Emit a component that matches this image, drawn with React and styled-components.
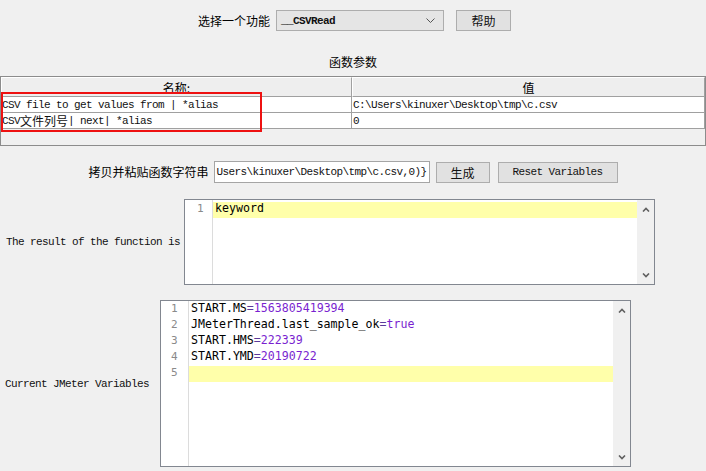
import React from 'react';
import styled, { createGlobalStyle } from 'styled-components';

const GlobalStyle = createGlobalStyle`
  html, body {
    margin: 0;
    padding: 0;
    background: #f0f0f0;
  }
  body {
    font-family: "Noto Sans CJK SC", "Liberation Sans", sans-serif;
    color: #000;
  }
`;

const SONG = `"Liberation Mono", "Noto Sans CJK SC", monospace`;
const CJK = `"Noto Sans CJK SC", "Liberation Sans", sans-serif`;

const Page = styled.div`
  width: 706px;
  height: 471px;
  overflow: hidden;
  display: flex;
  flex-direction: column;
  padding-top: 10px;
  box-sizing: border-box;
`;

const CenterRow = styled.div`
  display: flex;
  align-items: center;
  justify-content: center;
  margin-top: ${p => p.$top || 0}px;
  height: ${p => p.$h || 22}px;
  padding-left: ${p => p.$shift || 0}px;
`;

const CjkLabel = styled.span`
  font-family: ${CJK};
  font-size: 12px;
  line-height: 16px;
  white-space: nowrap;
  margin-right: ${p => p.$gap || 6}px;
`;

const Select = styled.div`
  width: 168px;
  height: 21px;
  box-sizing: border-box;
  border: 1px solid #adadad;
  background: #e5e5e5;
  display: flex;
  align-items: center;
  padding: 0 8px 0 4px;
  font-family: ${SONG};
  font-size: 11px;
  letter-spacing: -0.6px;
  font-weight: bold;
  color: #111;
`;

const SelectText = styled.span`
  flex: 1;
`;

const Button = styled.div`
  width: ${p => p.$w}px;
  height: 21px;
  box-sizing: border-box;
  border: 1px solid #adadad;
  background: #e1e1e1;
  display: flex;
  align-items: center;
  justify-content: center;
  margin-left: ${p => p.$gap || 0}px;
  font-family: ${p => (p.$mono ? SONG : CJK)};
  font-size: ${p => (p.$mono ? 11 : 12)}px;
  letter-spacing: ${p => (p.$mono ? '-0.6px' : '0')};
  color: #111;
`;

const Caption = styled.div`
  margin-top: 23px;
  height: 16px;
  line-height: 16px;
  text-align: center;
  font-family: ${CJK};
  font-size: 12px;
`;

const TableWrap = styled.div`
  position: relative;
  margin-top: 6px;
  height: 70px;
  box-sizing: border-box;
  border: 1px solid #8c8c8c;
  background: #f0f0f0;
`;

const HeaderRow = styled.div`
  display: grid;
  grid-template-columns: 351px 1fr;
  height: 20px;
`;

const HeaderCell = styled.div`
  border-top: 1px solid #ffffff;
  border-left: 1px solid #ffffff;
  border-right: 1px solid #a0a0a0;
  border-bottom: 1px solid #a0a0a0;
  background: #eeeeee;
  display: flex;
  align-items: center;
  justify-content: center;
  font-family: ${CJK};
  font-size: 12px;
`;

const DataRow = styled.div`
  display: grid;
  grid-template-columns: 351px 1fr;
  height: 16px;
  background: #fff;
`;

const DataCell = styled.div`
  border-right: 1px solid #a0a0a0;
  border-bottom: 1px solid #a0a0a0;
  padding-left: 1px;
  display: flex;
  align-items: center;
  font-family: ${SONG};
  font-size: 11px;
  letter-spacing: -0.6px;
  color: #111;
  white-space: pre;
  overflow: hidden;
`;

const Wide = styled.span`
  font-family: ${CJK};
  font-size: 12px;
  letter-spacing: 0;
`;

const Highlight = styled.div`
  position: absolute;
  left: 0;
  top: 15px;
  width: 261px;
  height: 40px;
  box-sizing: border-box;
  border: 2px solid #ee1111;
  pointer-events: none;
`;

const Field = styled.div`
  width: 216px;
  height: 22px;
  box-sizing: border-box;
  border: 1px solid #a5a5a5;
  background: #fff;
  display: flex;
  justify-content: flex-end;
  align-items: center;
  overflow: hidden;
  padding-right: 2px;
  font-family: ${SONG};
  font-size: 11px;
  letter-spacing: -0.6px;
  white-space: pre;
  color: #111;
`;

const EditorRow = styled.div`
  display: flex;
  align-items: center;
  margin-top: ${p => p.$top}px;
  padding-left: ${p => p.$pad}px;
`;

const MonoLabel = styled.div`
  width: ${p => p.$w}px;
  font-family: ${SONG};
  font-size: 11px;
  letter-spacing: -0.6px;
  color: #111;
  white-space: pre;
`;

const EditorBox = styled.div`
  width: 471px;
  height: ${p => p.$h}px;
  box-sizing: border-box;
  border: 1px solid #828790;
  background: #fff;
  display: flex;
`;

const Gutter = styled.div`
  width: 28px;
  border-right: 1px solid #dcdcdc;
  padding-top: ${p => p.$top}px;
  box-sizing: border-box;
`;

const LineNo = styled.div`
  height: 16px;
  line-height: 14px;
  padding-left: ${p => p.$indent}px;
  font-family: "DejaVu Sans Mono", monospace;
  font-size: 11px;
  color: #8a8a8a;
`;

const Lines = styled.div`
  flex: 1;
  padding-top: ${p => p.$top}px;
`;

const Line = styled.div`
  height: 16px;
  line-height: 13px;
  padding-left: 2px;
  background: ${p => (p.$active ? '#ffffaa' : 'transparent')};
  font-family: "DejaVu Sans Mono", monospace;
  font-size: 11.6px;
  color: #000;
  white-space: pre;
`;

const Value = styled.span`
  color: #7a1fd0;
`;

const Eq = styled.span`
  color: #5a3a9a;
`;

const Scrollbar = styled.div`
  width: 17px;
  background: #f0f0f0;
  display: flex;
  flex-direction: column;
  justify-content: space-between;
  align-items: center;
  padding: 7px 0 6px;
  box-sizing: border-box;
`;

const Chevron = ({ up }) => (
  <svg width="8" height="5" viewBox="0 0 8 5">
    <polyline
      points={up ? '1,4.5 4,1.5 7,4.5' : '1,0.5 4,3.5 7,0.5'}
      fill="none"
      stroke="#606060"
      strokeWidth="1.6"
    />
  </svg>
);

const Editor = ({ height, lines, active, top, indent }) => (
  <EditorBox $h={height}>
    <Gutter $top={top}>
      {lines.map((_, i) => (
        <LineNo key={i} $indent={indent}>
          {i + 1}
        </LineNo>
      ))}
    </Gutter>
    <Lines $top={top}>
      {lines.map((l, i) => (
        <Line key={i} $active={i === active}>
          {l}
        </Line>
      ))}
    </Lines>
    <Scrollbar>
      <Chevron up />
      <Chevron />
    </Scrollbar>
  </EditorBox>
);

const kv = (k, v) => (
  <>
    {k}
    <Eq>=</Eq>
    <Value>{v}</Value>
  </>
);

const variables = [
  kv('START.MS', '1563805419394'),
  kv('JMeterThread.last_sample_ok', 'true'),
  kv('START.HMS', '222339'),
  kv('START.YMD', '20190722'),
  '',
];

export default function App() {
  return (
    <Page>
      <GlobalStyle />
      <CenterRow $h={21} $shift={3}>
        <CjkLabel $gap={6}>选择一个功能</CjkLabel>
        <Select>
          <SelectText>__CSVRead</SelectText>
          <svg width="9" height="6" viewBox="0 0 9 6">
            <polyline points="0.5,0.5 4.5,4.5 8.5,0.5" fill="none" stroke="#555" strokeWidth="1" />
          </svg>
        </Select>
        <Button $w={55} $gap={12}>帮助</Button>
      </CenterRow>

      <Caption>函数参数</Caption>

      <TableWrap>
        <HeaderRow>
          <HeaderCell>名称:</HeaderCell>
          <HeaderCell>值</HeaderCell>
        </HeaderRow>
        <DataRow>
          <DataCell>CSV file to get values from | *alias</DataCell>
          <DataCell>C:\Users\kinuxer\Desktop\tmp\c.csv</DataCell>
        </DataRow>
        <DataRow>
          <DataCell>
            CSV<Wide>文件列号</Wide>| next| *alias
          </DataCell>
          <DataCell>0</DataCell>
        </DataRow>
        <Highlight />
      </TableWrap>

      <CenterRow $top={15} $h={22}>
        <CjkLabel $gap={5}>拷贝并粘贴函数字符串</CjkLabel>
        <Field>{'Users\\kinuxer\\Desktop\\tmp\\c.csv,0)}'}</Field>
        <Button $w={54} $gap={6}>生成</Button>
        <Button $w={120} $gap={8} $mono>Reset Variables</Button>
      </CenterRow>

      <EditorRow $pad={6} $top={16}>
        <MonoLabel $w={178}>The result of the function is</MonoLabel>
        <Editor height={86} lines={['keyword']} active={0} top={2} indent={12} />
      </EditorRow>

      <EditorRow $pad={5} $top={15}>
        <MonoLabel $w={155}>Current JMeter Variables</MonoLabel>
        <Editor height={167} lines={variables} active={4} top={1} indent={10} />
      </EditorRow>
    </Page>
  );
}
